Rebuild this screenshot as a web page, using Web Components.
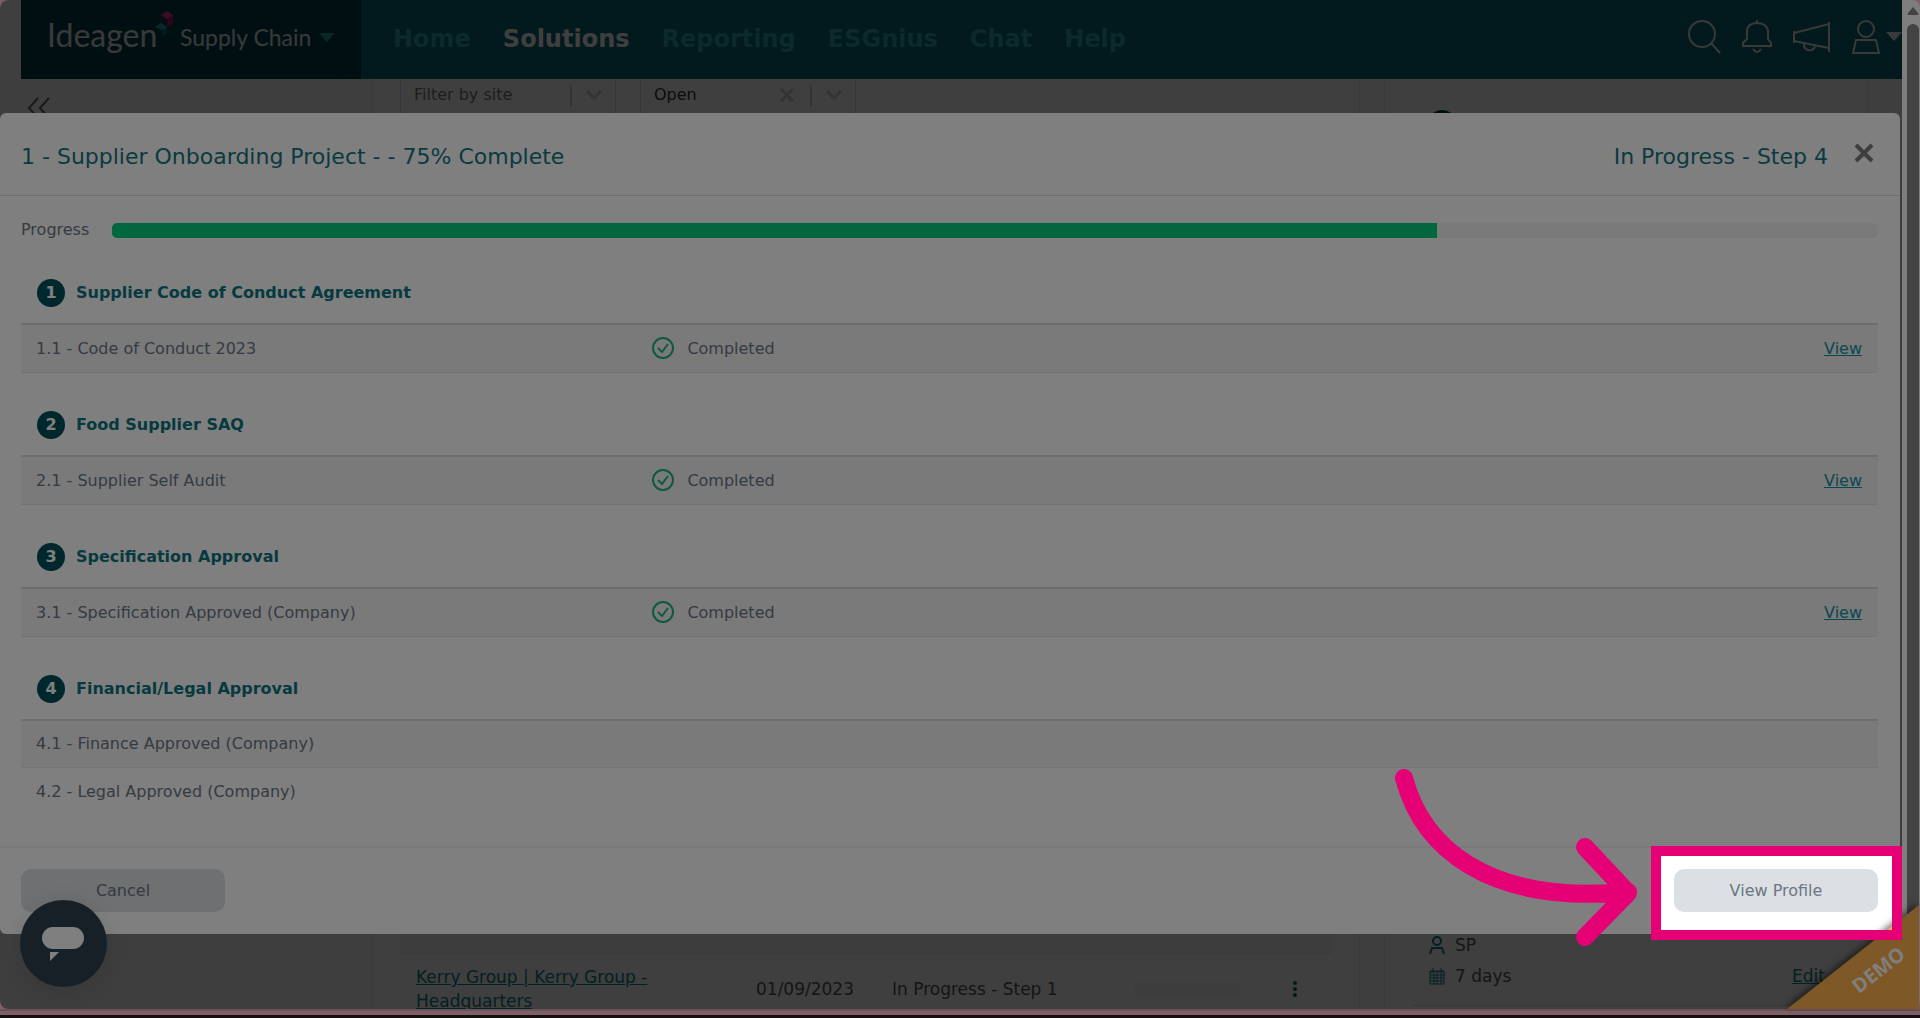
<!DOCTYPE html>
<html lang="en">
<head>
  <meta charset="utf-8">
  <meta name="viewport" content="width=device-width, initial-scale=1">
  <title>Ideagen Supply Chain</title>
  <style>
    :root {
      --teal: #0c7480;
      --text: #6b7685;
      --pink: #e60076;
    }
    body {
      margin: 0;
      font: 16px/24px "DejaVu Sans", Verdana, sans-serif;
      color: var(--text);
    }
  </style>
</head>
<body>
  <tour-stage>
    <app-header slot="page"></app-header>
    <projects-page slot="page"></projects-page>

    <project-dialog slot="overlay" heading="1 - Supplier Onboarding Project - - 75% Complete" status="In Progress - Step 4" progress="75">
      <step-section number="1" heading="Supplier Code of Conduct Agreement" items="1.1 - Code of Conduct 2023" completed></step-section>
      <step-section number="2" heading="Food Supplier SAQ" items="2.1 - Supplier Self Audit" completed></step-section>
      <step-section number="3" heading="Specification Approval" items="3.1 - Specification Approved (Company)" completed></step-section>
      <step-section number="4" heading="Financial/Legal Approval" items="4.1 - Finance Approved (Company)|4.2 - Legal Approved (Company)"></step-section>
    </project-dialog>

    <chat-launcher slot="overlay"></chat-launcher>
    <demo-ribbon slot="top">DEMO</demo-ribbon>
    <tour-highlight slot="top"></tour-highlight>
  </tour-stage>

  <script>
    // Small base class: every element renders one string into its shadow root
    class BaseElement extends HTMLElement {
      constructor() {
        super();
        this.attachShadow({ mode: 'open' });
      }

      connectedCallback() {
        this.shadowRoot.innerHTML = `<style>*, *::before, *::after { box-sizing: border-box; }</style>${this.render()}`;
      }
    }

    // Window frame: scrolling viewport, scrollbar and the coloured strip below
    class TourStage extends BaseElement {
      render() {
        return `
          <style>
            :host {
              display: flex;
              flex-direction: column;
              position: relative;
              height: 100vh;
              overflow: hidden;
              background: #ffc0d2;
            }
            .window {
              flex: 1;
              display: flex;
              min-height: 0;
              border-radius: 8px;
              overflow: hidden;
              background: #fdfdfd;
            }
            .viewport {
              flex: 1;
              min-width: 0;
              position: relative;
              display: flex;
              flex-direction: column;
              overflow: hidden;
              background: #fff;
            }
            .backdrop {
              position: absolute;
              inset: 0;
              background: rgba(0, 0, 0, .5);
            }
            .scrollbar {
              width: 18px;
              display: flex;
              flex-direction: column;
              align-items: center;
              padding: 7px 1px 0 5px;
              gap: 9px;
            }
            .scrollbar svg { display: block; }
            .thumb {
              flex: 1;
              width: 12px;
              border-radius: 6px 6px 0 0;
              background: #868686;
            }
            .strip {
              height: 9px;
              border-top: 2px solid #d9a5b3;
              border-bottom: 3px solid #2a2020;
            }
          </style>
          <div class="window">
            <div class="viewport">
              <slot name="page"></slot>
              <div class="backdrop"></div>
              <slot name="overlay"></slot>
            </div>
            <div class="scrollbar">
              <svg width="12" height="8" viewBox="0 0 12 8"><path d="M6 0 11 6Q12 8 10 8H2Q0 8 1 6Z" fill="#868686"/></svg>
              <div class="thumb"></div>
            </div>
          </div>
          <div class="strip"></div>
          <slot name="top"></slot>
        `;
      }
    }

    class AppHeader extends BaseElement {
      render() {
        const links = ['Home', 'Solutions', 'Reporting', 'ESGnius', 'Chat', 'Help'];
        return `
          <style>
            :host { display: block; padding-left: 21px; }
            header {
              display: flex;
              height: 79px;
              background: #086a76;
            }
            .brand {
              width: 340px;
              padding: 0 26px 10px;
              display: flex;
              align-items: center;
              gap: 8px;
              border: 0;
              background: #00404a;
              color: #e4e4e4;
              font-family: Lato, sans-serif;
              text-align: left;
            }
            .name { position: relative; width: 128px; font-size: 32px; line-height: 40px; }
            .name svg { position: absolute; right: -2px; top: -4px; }
            .product { font-size: 23px; line-height: 32px; padding-top: 4px; white-space: nowrap; }
            .caret { margin-top: 6px; }
            nav {
              flex: 1;
              display: flex;
              align-items: center;
              gap: 32px;
              padding: 0 32px 2px;
            }
            nav a {
              color: #30a4b0;
              text-decoration: none;
              font-size: 24px;
              line-height: 32px;
              font-weight: bold;
            }
            nav a.current { color: #fff; }
            .tools { display: flex; align-items: center; gap: 19px; padding-bottom: 6px; }
            .tools button { display: flex; align-items: center; border: 0; padding: 0; background: none; }
            .tools svg { fill: none; stroke: #e4e4e4; stroke-width: 2; }
          </style>
          <header>
            <button class="brand" aria-label="Ideagen Supply Chain">
              <span class="name">Ideagen
                <svg width="20" height="26" viewBox="0 0 20 26">
                  <path d="M7 4 13 0l6 4v8l-6 4V8z" fill="#c0105c"/>
                  <path d="M7 4 13 0l6 4-6 4z" fill="#d83c80"/>
                  <path d="M1 16l6-4 6 4v6l-5 4v-7z" fill="#007080"/>
                  <path d="M1 16l6-4 6 4-5 3z" fill="#3498a4"/>
                </svg>
              </span>
              <span class="product">Supply Chain</span>
              <svg class="caret" width="16" height="9" viewBox="0 0 16 9"><path d="M0 0h16L8 9z" fill="#2c98a2"/></svg>
            </button>
            <nav>
              ${links.map(l => `<a href="#"${l === 'Solutions' ? ' class="current"' : ''}>${l}</a>`).join('')}
            </nav>
            <div class="tools">
              <button aria-label="Search"><svg width="34" height="34" viewBox="0 0 34 34"><circle cx="14" cy="14" r="13"/><path d="M23 23l9 10"/></svg></button>
              <button aria-label="Notifications"><svg width="32" height="34" viewBox="0 0 32 34"><path d="M16 0v3M2 26h28v-3l-3-4V12C27 6 22 3 16 3S6 6 6 12v7l-4 4zM12 29q4 6 8 0"/></svg></button>
              <button aria-label="News"><svg width="40" height="34" viewBox="0 0 40 34"><path d="M2 11v12M2 13 37 4v24L2 21M37 2v30M12 24c0 8 10 8 11 2"/></svg></button>
              <button aria-label="Account">
                <svg width="30" height="34" viewBox="0 0 30 34"><circle cx="15" cy="9" r="8"/><path d="M5 20h20l3 13H2z"/></svg>
                <svg width="21" height="9" viewBox="0 0 21 9"><path d="M5 0h16L13 9z" fill="#e4e4e4" stroke="none"/></svg>
              </button>
            </div>
          </header>
        `;
      }
    }

    class FilterSelect extends BaseElement {
      render() {
        const clear = this.hasAttribute('clearable')
          ? '<button aria-label="Clear"><svg width="14" height="14" viewBox="0 0 14 14"><path d="M1 1l12 12M13 1 1 13"/></svg></button>'
          : '';
        return `
          <style>
            :host { display: block; width: 216px; }
            .box {
              display: flex;
              align-items: center;
              height: 52px;
              padding: 0 13px;
              border: 1px solid #e2e2e2;
              background: #fff;
            }
            select {
              flex: 1;
              min-width: 0;
              appearance: none;
              border: 0;
              padding: 0;
              background: none;
              font: inherit;
              color: inherit;
            }
            button { border: 0; padding: 0; margin-right: 16px; background: none; display: flex; }
            svg { fill: none; stroke: #ccc; stroke-width: 3; }
            .bar { width: 2px; height: 21px; margin-right: 14px; background: #ccc; }
          </style>
          <div class="box">
            <select aria-label="${this.getAttribute('label')}"><option>${this.getAttribute('value')}</option></select>
            ${clear}
            <span class="bar"></span>
            <svg width="16" height="10" viewBox="0 0 16 10"><path d="M1 1l7 7 7-7"/></svg>
          </div>
        `;
      }
    }

    // The project list behind the dialog
    class ProjectsPage extends BaseElement {
      render() {
        return `
          <style>
            :host { flex: 1; min-height: 0; display: flex; gap: 24px; overflow: hidden; background: #fafafa; color: #555; }
            aside { width: 338px; padding: 18px 26px; background: #f8f8f8; border-right: 1px solid #f0f0f0; }
            aside button { border: 0; padding: 0; background: none; }
            aside svg { fill: none; stroke: #666; stroke-width: 2; }
            main, section {
              display: flex;
              flex-direction: column;
              justify-content: space-between;
              border: solid #ebebeb;
              border-width: 0 1px;
              background: #fdfdfd;
            }
            main { flex: 1; padding: 0 27px; margin-left: 10px; }
            .filters { display: flex; gap: 24px; margin-top: -10px; }
            .filters :first-child { color: #777; }
            .filters :last-child { color: #333; }
            table { width: 100%; margin-bottom: -4px; border-collapse: collapse; table-layout: fixed; font-size: 17px; }
            td { padding: 11px 0 0 16px; line-height: 24px; border-top: 2px solid #f2f2f2; }
            .previous td { height: 40px; background: #f5f5f5; }
            a { color: #0c8088; }
            .pill { display: block; width: 107px; height: 15px; border-radius: 6px; background: #f4f4f4; }
            td svg { display: block; }
            section { width: 484px; padding: 31px 27px 3px; margin-right: 34px; }
            .dot { width: 28px; height: 28px; margin-left: 16px; border-radius: 50%; background: #003a44; }
            .meta { display: grid; grid-template-columns: 16px 1fr auto; column-gap: 10px; row-gap: 7px; align-items: center; padding: 0 15px 17px 17px; border-bottom: 1px solid #ddd; font-size: 17px; }
            .meta svg { fill: none; stroke: #0c8088; stroke-width: 2; }
          </style>
          <aside>
            <button aria-label="Collapse menu"><svg width="26" height="24" viewBox="0 0 26 24"><path d="M12 1 3 11l9 10M23 1l-9 10 9 10"/></svg></button>
          </aside>
          <main>
            <div class="filters">
              <filter-select label="Site" value="Filter by site"></filter-select>
              <filter-select label="Status" value="Open" clearable></filter-select>
            </div>
            <table>
              <colgroup><col style="width:340px"><col style="width:136px"><col style="width:26%"><col><col style="width:6%"></colgroup>
              <tr class="previous"><td colspan="5"></td></tr>
              <tr>
                <td><a href="#">Kerry Group | Kerry Group -<br>Headquarters</a></td>
                <td>01/09/2023</td>
                <td>In Progress - Step 1</td>
                <td><span class="pill"></span></td>
                <td><svg width="6" height="18" viewBox="0 0 6 18" fill="#0c6068"><circle cx="3" cy="3" r="2"/><circle cx="3" cy="9" r="2"/><circle cx="3" cy="15" r="2"/></svg></td>
              </tr>
            </table>
          </main>
          <section>
            <div class="dot"></div>
            <div class="meta">
              <svg width="16" height="18" viewBox="0 0 16 18"><circle cx="8" cy="5" r="4"/><path d="M1 18l2-6h10l2 6"/></svg>
              <span>SP</span><span></span>
              <svg width="16" height="17" viewBox="0 0 16 17" style="stroke-width:1"><path d="M1 3h14v13H1zM1 4h14M1 7h14M1 10h14M1 13h14M5 5v11M8 5v11M12 5v11M4 0v4M12 0v4"/></svg>
              <span>7 days</span><a href="#">Edit</a>
            </div>
          </section>
        `;
      }
    }

    class ProjectDialog extends BaseElement {
      render() {
        const progress = this.getAttribute('progress');
        return `
          <style>
            :host {
              display: block;
              position: absolute;
              top: 113px;
              left: 0;
              right: 2px;
              border-radius: 6px;
              background: #fff;
            }
            header {
              display: flex;
              align-items: center;
              height: 83px;
              padding: 6px 26px 0 21px;
              border-bottom: 1px solid #dedede;
              color: #14747e;
              font-size: 22px;
              line-height: 28px;
            }
            h2 { flex: 1; margin: 0; font: inherit; }
            .close { display: flex; border: 0; padding: 0 0 8px; margin-left: 26px; background: none; }
            .body { padding: 22px 22px 31px 21px; }
            .progress { display: flex; align-items: center; gap: 23px; margin-bottom: 20px; }
            .track { flex: 1; height: 15px; border-radius: 5px; overflow: hidden; background: #f4f4f4; }
            .fill { width: ${progress}%; height: 100%; background: #04cc7e; }
            .steps { display: flex; flex-direction: column; gap: 21px; }
            footer {
              display: flex;
              justify-content: space-between;
              padding: 21px 22px 22px 21px;
              border-top: 2px solid #f2f2f4;
            }
            footer button {
              width: 204px;
              height: 43px;
              border: 0;
              border-radius: 10px;
              background: #dce0e3;
              font: inherit;
              color: inherit;
            }
          </style>
          <header>
            <h2>${this.getAttribute('heading')}</h2>
            <span>${this.getAttribute('status')}</span>
            <button class="close" aria-label="Close"><svg width="20" height="20" viewBox="0 0 20 20"><path d="M2 2l16 16M18 2 2 18" stroke="#7c7c7c" stroke-width="4"/></svg></button>
          </header>
          <div class="body">
            <div class="progress">
              <span id="label">Progress</span>
              <div class="track" role="progressbar" aria-labelledby="label" aria-valuenow="${progress}"><div class="fill"></div></div>
            </div>
            <div class="steps"><slot></slot></div>
          </div>
          <footer>
            <button>Cancel</button>
            <button>View Profile</button>
          </footer>
        `;
      }
    }

    class StepSection extends BaseElement {
      render() {
        const done = this.hasAttribute('completed');
        const status = `<span class="status">
          <svg width="22" height="24" viewBox="0 0 22 24" fill="none" stroke="#1cb479" stroke-width="2"><circle cx="11" cy="11" r="10"/><path d="M6 11l4 4 6-8"/></svg>
          Completed</span>`;
        const rows = this.getAttribute('items').split('|').map(item => `
          <tr>
            <td>${item}</td>
            <td>${done ? status : ''}</td>
            <td>${done ? '<a href="#">View</a>' : ''}</td>
          </tr>`).join('');
        return `
          <style>
            :host { display: block; }
            h3 {
              display: flex;
              align-items: center;
              gap: 11px;
              height: 61px;
              margin: 0;
              padding-left: 16px;
              color: var(--teal);
              font-size: 16px;
            }
            .badge {
              width: 28px;
              height: 28px;
              border-radius: 50%;
              background: #005058;
              color: #fff;
              line-height: 28px;
              text-align: center;
            }
            table { width: 100%; border-collapse: separate; border-spacing: 0; table-layout: fixed; border-top: 2px solid #dadde1; }
            td { height: 47px; padding: 0 16px; }
            :host([completed]) td { height: 48px; }
            td:nth-child(1) { width: 34%; padding-left: 15px; }
            td:nth-child(2) { padding-left: 0; }
            td:last-child { text-align: right; }
            tr:nth-child(odd) td { background: #f4f4f5; border-bottom: 1px solid #e8e8ea; }
            .status { display: flex; align-items: center; gap: 13px; }
            a { color: #1490a0; }
          </style>
          <h3><span class="badge">${this.getAttribute('number')}</span>${this.getAttribute('heading')}</h3>
          <table>${rows}</table>
        `;
      }
    }

    class ChatLauncher extends BaseElement {
      render() {
        return `
          <style>
            :host { display: block; position: absolute; left: 20px; bottom: 22px; }
            button {
              display: flex;
              align-items: center;
              justify-content: center;
              width: 87px;
              height: 87px;
              padding: 0 2px 0 0;
              border: 0;
              border-radius: 50%;
              background: #30404e;
              box-shadow: 0 4px 24px rgba(0, 0, 0, .12);
            }
          </style>
          <button aria-label="Open chat">
            <svg width="42" height="34" viewBox="0 0 42 34" fill="#fff"><rect width="42" height="22" rx="11"/><path d="M8 25h9l-9 9z"/></svg>
          </button>
        `;
      }
    }

    // Corner triangle showing the environment name
    class DemoRibbon extends BaseElement {
      render() {
        return `
          <style>
            :host {
              display: block;
              position: absolute;
              right: 1px;
              bottom: 9px;
              width: 132px;
              height: 104px;
              filter: drop-shadow(-2px -2px 3px rgba(0, 0, 0, .5));
            }
            .corner {
              display: flex;
              align-items: flex-end;
              justify-content: flex-end;
              height: 100%;
              padding: 0 10px 27px;
              clip-path: polygon(100% 0, 100% 100%, 0 100%);
              background: #fcb04e;
            }
            span {
              color: #fff;
              font: bold 20px/24px "Open Sans", sans-serif;
              transform: rotate(-38deg);
            }
          </style>
          <div class="corner"><span><slot></slot></span></div>
        `;
      }
    }

    // Dims everything except the framed control and points an arrow at it
    class TourHighlight extends BaseElement {
      render() {
        return `
          <style>
            :host {
              display: block;
              position: absolute;
              right: 18px;
              bottom: 78px;
              width: 251px;
              height: 94px;
              pointer-events: none;
            }
            .frame {
              height: 100%;
              border: 10px solid var(--pink);
              box-shadow: 0 0 0 4000px rgba(0, 0, 0, .5);
            }
            svg { position: absolute; right: calc(100% + 11px); top: -78px; }
          </style>
          <div class="frame"></div>
          <svg width="246" height="180" viewBox="0 0 246 180" fill="none" stroke="var(--pink)" stroke-width="18" stroke-linecap="round" stroke-linejoin="round">
            <path d="M10 10C28 78 92 137 234 124M191 79l43 46-43 44"/>
          </svg>
        `;
      }
    }

    customElements.define('tour-stage', TourStage);
    customElements.define('app-header', AppHeader);
    customElements.define('filter-select', FilterSelect);
    customElements.define('projects-page', ProjectsPage);
    customElements.define('project-dialog', ProjectDialog);
    customElements.define('step-section', StepSection);
    customElements.define('chat-launcher', ChatLauncher);
    customElements.define('demo-ribbon', DemoRibbon);
    customElements.define('tour-highlight', TourHighlight);
  </script>
</body>
</html>
